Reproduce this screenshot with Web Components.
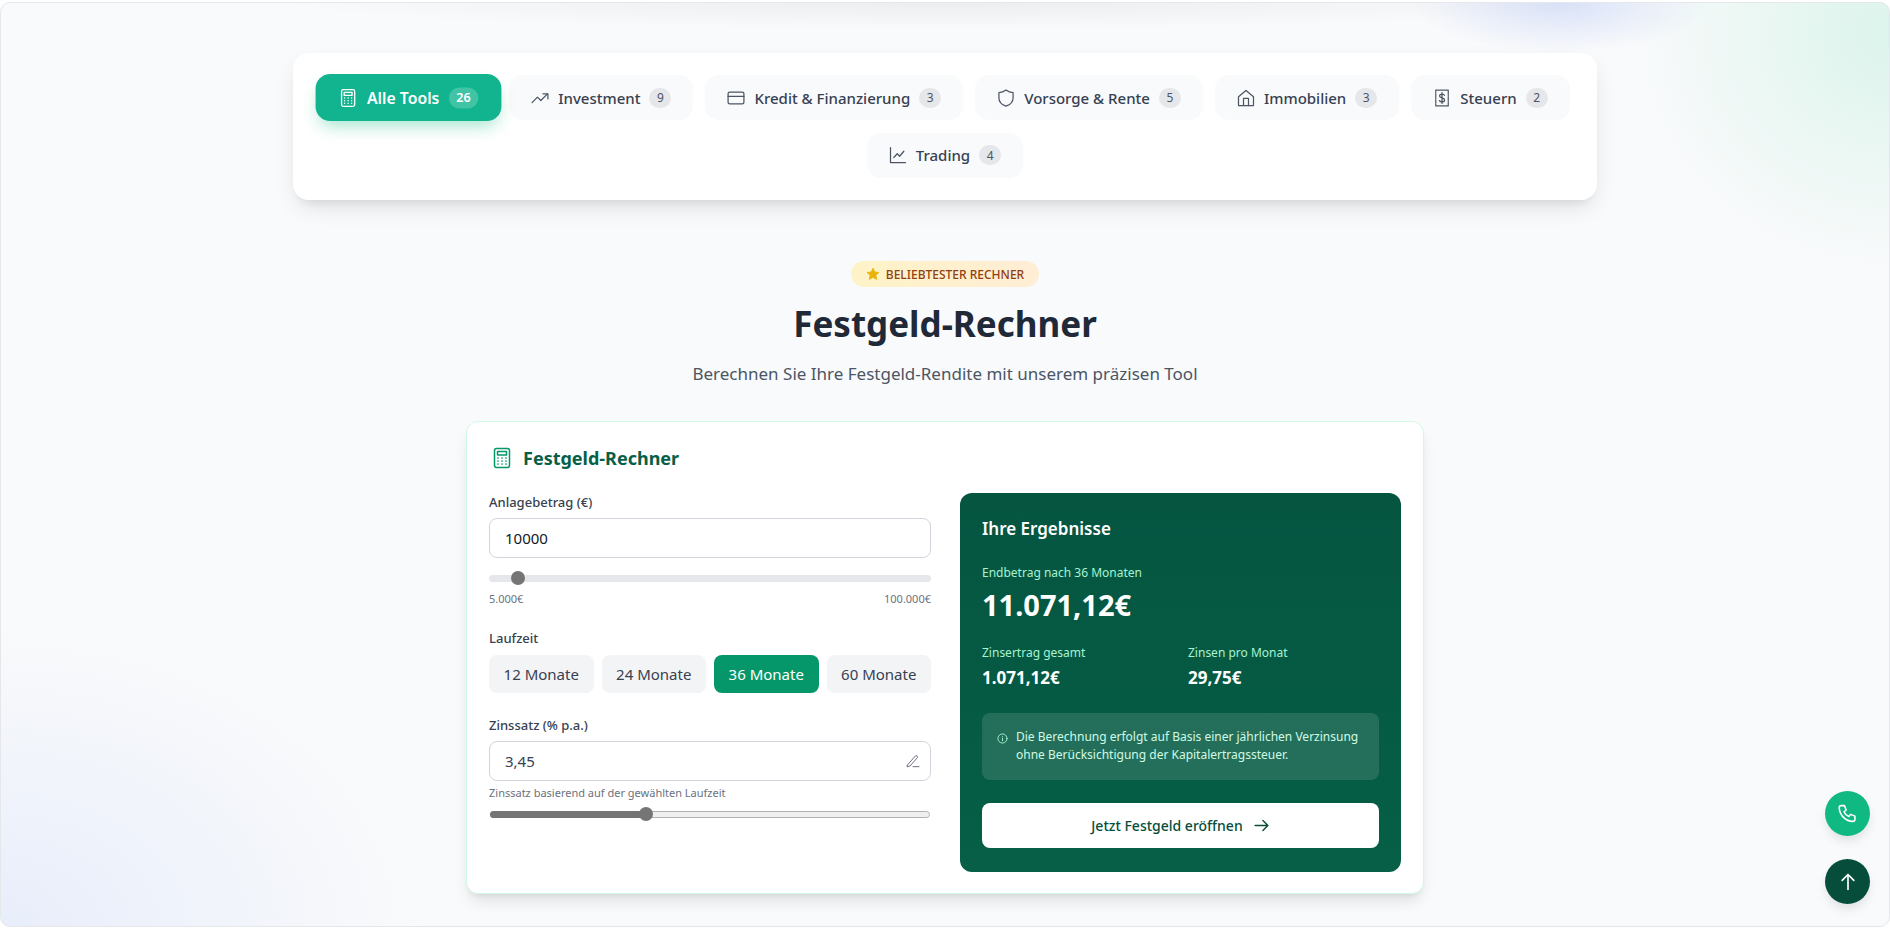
<!DOCTYPE html>
<html lang="de">
<head>
<meta charset="utf-8">
<title>Festgeld-Rechner</title>
<style>
html, body { margin: 0; height: 100%; }
body { font-family: "Noto Sans", "Open Sans", sans-serif; overflow: hidden; background: #fff; }
</style>
</head>
<body>
<page-frame>
  <tool-nav>
    <tool-tab active icon="calc" count="26">Alle Tools</tool-tab>
    <tool-tab icon="trend" count="9">Investment</tool-tab>
    <tool-tab icon="card" count="3">Kredit &amp; Finanzierung</tool-tab>
    <tool-tab icon="shield" count="5">Vorsorge &amp; Rente</tool-tab>
    <tool-tab icon="house" count="3">Immobilien</tool-tab>
    <tool-tab icon="tax" count="2">Steuern</tool-tab>
    <tool-tab icon="chart" count="4">Trading</tool-tab>
  </tool-nav>
  <section-head>
    <span slot="badge">BELIEBTESTER RECHNER</span>
    <span slot="title">Festgeld-Rechner</span>
    <span slot="sub">Berechnen Sie Ihre Festgeld-Rendite mit unserem präzisen Tool</span>
  </section-head>
  <calc-card>
    <span slot="title">Festgeld-Rechner</span>
    <calc-form slot="left"></calc-form>
    <result-panel slot="right"></result-panel>
  </calc-card>
  <float-buttons></float-buttons>
</page-frame>

<script>
const ICONS = {
  calc: '<rect x="4.5" y="2.5" width="15" height="19" rx="2"/><rect x="7.5" y="5.5" width="9" height="3.5"/><path d="M8 12h.01M12 12h.01M16 12h.01M8 15h.01M12 15h.01M16 15h.01M8 18h.01M12 18h.01M16 18h.01" stroke-width="1.7"/>',
  trend: '<path d="M2.5 17.5l6.5-6.5 4 4 8-8"/><path d="M15.5 7h6v6"/>',
  card: '<rect x="2.5" y="5" width="19" height="14" rx="2"/><path d="M2.5 10h19"/>',
  shield: '<path d="M12 2.5c2.6 2 5.3 3 8.5 3v6.5c0 4.8-3.4 8-8.5 9.700-5.100-1.700-8.500-4.900-8.500-9.700V5.500c3.200 0 5.900-1 8.500-3z"/>',
  house: '<path d="M3 10.500L12 3l9 7.500V21H3z"/><path d="M9 21v-8.500h6V21"/>',
  tax: '<path d="M4.500 2.500h15v19h-15z" stroke-dasharray="1.600 .9"/><path d="M15 8.700c-.6-1-1.600-1.500-3-1.500-1.700 0-2.900.9-2.900 2.300 0 3.200 6 1.700 6 4.900 0 1.400-1.300 2.300-3.100 2.300-1.400 0-2.500-.6-3.100-1.600M12 5.500v13"/>',
  chart: '<path d="M3 3v18h18"/><path d="M7 15l4-4.500 3 3 5-6"/>'
};

function icon(name, size) {
  return `<svg width="${size}" height="${size}" viewBox="0 0 24 24" fill="none" stroke="currentColor" stroke-width="1.5" stroke-linecap="round" stroke-linejoin="round">${ICONS[name]}</svg>`;
}

class PageFrame extends HTMLElement {
  constructor() {
    super();
    this.attachShadow({ mode: 'open' });
    this.shadowRoot.innerHTML = `
    <style>
    :host {
      display: block;
      box-sizing: border-box;
      height: 925px;
      margin-top: 2px;
      padding-top: 50px;
      border: 1px solid #e5e7eb;
      border-radius: 10px;
      background:
        radial-gradient(ellipse 680px 26px at 946px 0, rgba(0,0,0,.05), transparent),
        radial-gradient(ellipse 150px 50px at 1560px 0, rgba(190,205,245,.55), transparent),
        radial-gradient(ellipse 260px 240px at 1890px 30px, rgba(200,240,225,.6), transparent),
        radial-gradient(ellipse 420px 300px at 0 925px, rgba(215,225,250,.5), transparent),
        #f9fafb;
      overflow: hidden;
    }
    </style>
    <slot></slot>
    `;
  }
}

class ToolNav extends HTMLElement {
  constructor() {
    super();
    this.attachShadow({ mode: 'open' });
    this.shadowRoot.innerHTML = `
    <style>
    :host {
      display: flex;
      flex-wrap: wrap;
      justify-content: center;
      gap: 12px;
      box-sizing: border-box;
      width: 1304px;
      height: 147px;
      margin: 0 auto;
      padding: 22px 24px;
      background: rgba(255,255,255,.95);
      border-radius: 16px;
      box-shadow: 0 10px 25px -5px rgba(0,0,0,.12), 0 8px 10px -6px rgba(0,0,0,.08);
    }
    </style>
    <slot></slot>
    `;
  }
}

class ToolTab extends HTMLElement {
  constructor() {
    super();
    this.attachShadow({ mode: 'open' });
  }
  connectedCallback() {
    const iconName = this.getAttribute('icon');
    const count = this.getAttribute('count');
    this.shadowRoot.innerHTML = `
    <style>
    :host {
      display: inline-flex;
      align-items: center;
      gap: 8px;
      box-sizing: border-box;
      height: 45px;
      padding: 0 22px 0 21px;
      border-radius: 14px;
      background: #f9fafb;
      color: #374151;
      font-size: 15px;
      font-weight: 500;
      white-space: nowrap;
    }
    :host([active]) {
      background: linear-gradient(135deg, #10b981, #14b8a6 90%);
      background: #12b48f;
      color: #fff;
      font-weight: 600;
      transform: scale(1.05);
      box-shadow: 0 8px 16px -4px rgba(16,185,129,.4);
    }
    svg { flex: none; color: #4b5563; }
    :host([active]) svg { color: #fff; }
    .count {
      display: flex;
      align-items: center;
      justify-content: center;
      min-width: 22px;
      height: 20px;
      padding: 0 2px;
      box-sizing: border-box;
      margin-left: 1px;
      border-radius: 10px;
      background: #e5e7eb;
      color: #4b5563;
      font-size: 12px;
      font-weight: 400;
    }
    :host([active]) .count { background: rgba(255,255,255,.2); color: #fff; font-weight: 600; min-width: 28px; }
    </style>
    ${icon(iconName, 20)}
    <span><slot></slot></span>
    <span class="count">${count}</span>
    `;
  }
}

class SectionHead extends HTMLElement {
  constructor() {
    super();
    this.attachShadow({ mode: 'open' });
    this.shadowRoot.innerHTML = `
    <style>
    :host { display: flex; flex-direction: column; align-items: center; margin-top: 61px; }
    .badge {
      display: flex;
      align-items: center;
      gap: 6px;
      height: 26px;
      padding: 0 15px;
      border-radius: 13px;
      background: linear-gradient(90deg, #fef3c7, #ffedd5);
      color: #92400e;
      font-size: 12px;
      font-weight: 500;
    }
    .title { margin: 13px 0 0; font-size: 35px; line-height: 48px; font-weight: 700; color: #1f2937; }
    .sub { margin: 13px 0 0; font-size: 17px; line-height: 26px; color: #4b5563; }
    </style>
    <div class="badge">
      <svg width="14" height="14" viewBox="0 0 24 24"><path d="M12 2l3 6.600 7.200.8-5.400 4.800 1.500 7.100L12 17.700 5.700 21.300l1.500-7.100L1.800 9.400 9 8.600z" fill="#eab308" stroke="#eab308" stroke-width="1.500" stroke-linejoin="round"/></svg>
      <slot name="badge"></slot>
    </div>
    <h1 class="title"><slot name="title"></slot></h1>
    <p class="sub"><slot name="sub"></slot></p>
    `;
  }
}

class CalcCard extends HTMLElement {
  constructor() {
    super();
    this.attachShadow({ mode: 'open' });
    this.shadowRoot.innerHTML = `
    <style>
    :host {
      display: block;
      box-sizing: border-box;
      width: 958px;
      height: 473px;
      margin: 34px auto 0;
      padding: 21px 22px 21px;
      background: #fff;
      border: 1px solid #d1fae5;
      border-radius: 12px;
      box-shadow: 0 10px 15px -3px rgba(0,0,0,.1), 0 4px 6px -4px rgba(0,0,0,.1);
    }
    .head { display: flex; align-items: center; gap: 9px; height: 30px; color: #065f46; }
    .head svg { color: #059669; margin-left: 1px; }
    h2 { margin: 0; font-size: 18px; font-weight: 700; color: #065f46; }
    .cols { display: grid; grid-template-columns: 442px 441px; gap: 29px; margin-top: 20px; }
    </style>
    <div class="head">
      ${icon('calc', 24)}
      <h2><slot name="title"></slot></h2>
    </div>
    <div class="cols">
      <slot name="left"></slot>
      <slot name="right"></slot>
    </div>
    `;
  }
}

class RangeBar extends HTMLElement {
  constructor() {
    super();
    this.attachShadow({ mode: 'open' });
  }
  connectedCallback() {
    const pos = this.getAttribute('pos');
    this.shadowRoot.innerHTML = `
    <style>
    :host { display: block; position: relative; height: 14px; }
    .track {
      position: absolute; left: 0; right: 0; top: 4px; height: 7px;
      box-sizing: border-box;
      border-radius: 4px;
      background: #e5e7eb;
    }
    :host([native]) .track { background: #efefef; border: 1px solid #b2b2b2; left: 1px; right: 1px; }
    .fill { display: none; position: absolute; left: 1px; top: 4px; height: 7px; width: ${pos}px; background: #757575; border-radius: 4px 0 0 4px; }
    :host([native]) .fill { display: block; }
    .thumb {
      position: absolute; left: ${pos}px; top: 0; margin-left: -7px;
      width: 14px; height: 14px; border-radius: 50%; background: #757575;
    }
    </style>
    <div class="track"></div>
    <div class="fill"></div>
    <div class="thumb"></div>
    `;
  }
}

class ValueField extends HTMLElement {
  constructor() {
    super();
    this.attachShadow({ mode: 'open' });
    this.shadowRoot.innerHTML = `
    <style>
    :host {
      display: flex;
      align-items: center;
      justify-content: space-between;
      box-sizing: border-box;
      height: 40px;
      padding: 0 9px 0 15px;
      background: #fff;
      border: 1px solid #d1d5db;
      border-radius: 8px;
      font-size: 15px;
      color: #111827;
    }
    :host([muted]) { color: #374151; }
    ::slotted(svg) { color: #6b7280; }
    </style>
    <slot></slot>
    <slot name="end"></slot>
    `;
  }
}

class TermPicker extends HTMLElement {
  constructor() {
    super();
    this.attachShadow({ mode: 'open' });
    this.shadowRoot.innerHTML = `
    <style>
    :host { display: grid; grid-template-columns: repeat(4, 1fr); gap: 8px; }
    div {
      display: flex;
      align-items: center;
      justify-content: center;
      height: 38px;
      border-radius: 8px;
      background: #f3f4f6;
      color: #374151;
      font-size: 15px;
    }
    .on { background: #059669; color: #fff; }
    </style>
    <div>12 Monate</div>
    <div>24 Monate</div>
    <div class="on">36 Monate</div>
    <div>60 Monate</div>
    `;
  }
}

class CalcForm extends HTMLElement {
  constructor() {
    super();
    this.attachShadow({ mode: 'open' });
    this.shadowRoot.innerHTML = `
    <style>
    :host { display: block; }
    label { display: block; height: 18px; line-height: 18px; font-size: 13px; font-weight: 500; color: #374151; }
    value-field { margin-top: 7px; }
    .ends { display: flex; justify-content: space-between; margin-top: 7px; font-size: 11px; line-height: 14px; color: #6b7280; }
    .hint { margin-top: 5px; font-size: 11px; line-height: 14px; color: #6b7280; }
    </style>
    <label>Anlagebetrag (€)</label>
    <value-field>10000</value-field>
    <range-bar pos="29" style="margin-top:13px"></range-bar>
    <div class="ends"><span>5.000€</span><span>100.000€</span></div>
    <label style="margin-top:23px">Laufzeit</label>
    <term-picker style="margin-top:8px"></term-picker>
    <label style="margin-top:23px">Zinssatz (% p.a.)</label>
    <value-field muted>3,45
      <svg slot="end" width="16" height="16" viewBox="0 0 24 24" fill="none" stroke="currentColor" stroke-width="1.500" stroke-linecap="round" stroke-linejoin="round"><path d="M4 17.500L15.500 4.500a2 2 0 0 1 3 2.600L7.500 19.500 3.500 20.500zM12 20.500h9"/></svg>
    </value-field>
    <div class="hint">Zinssatz basierend auf der gewählten Laufzeit</div>
    <range-bar native pos="157" style="margin-top:7px"></range-bar>
    `;
  }
}

class ResultPanel extends HTMLElement {
  constructor() {
    super();
    this.attachShadow({ mode: 'open' });
    this.shadowRoot.innerHTML = `
    <style>
    :host {
      display: block;
      box-sizing: border-box;
      height: 379px;
      padding: 24px 22px 0;
      border-radius: 12px;
      background: linear-gradient(180deg, #055541, #065f46);
      color: #fff;
    }
    h3 { margin: 0; font-size: 17px; line-height: 24px; font-weight: 600; }
    .small { font-size: 12px; line-height: 18px; color: #a7f3d0; }
    .big { margin-top: 3px; font-size: 29px; line-height: 40px; font-weight: 700; }
    .two { display: grid; grid-template-columns: 206px 1fr; margin-top: 19px; }
    .val { margin-top: 4px; font-size: 17px; line-height: 24px; font-weight: 700; }
    .info {
      display: flex;
      gap: 8px;
      box-sizing: border-box;
      height: 67px;
      margin-top: 23px;
      padding: 15px 15px 0;
      border-radius: 8px;
      background: rgba(255,255,255,.12);
      color: #d1fae5;
      font-size: 12px;
      line-height: 18px;
    }
    .info svg { flex: none; margin-top: 5px; color: #a7f3d0; }
    .cta {
      display: flex;
      align-items: center;
      justify-content: center;
      gap: 10px;
      height: 45px;
      margin-top: 23px;
      border-radius: 8px;
      background: #fff;
      color: #064e3b;
      font-size: 14px;
      font-weight: 500;
    }
    </style>
    <h3>Ihre Ergebnisse</h3>
    <div class="small" style="margin-top:23px">Endbetrag nach 36 Monaten</div>
    <div class="big">11.071,12€</div>
    <div class="two">
      <div><div class="small">Zinsertrag gesamt</div><div class="val">1.071,12€</div></div>
      <div><div class="small">Zinsen pro Monat</div><div class="val">29,75€</div></div>
    </div>
    <div class="info">
      <svg width="11" height="11" viewBox="0 0 24 24" fill="none" stroke="currentColor" stroke-width="2" stroke-linecap="round"><circle cx="12" cy="12" r="10"/><path d="M12 11v6M12 7.500h.01"/></svg>
      <span>Die Berechnung erfolgt auf Basis einer jährlichen Verzinsung ohne Berücksichtigung der Kapitalertragssteuer.</span>
    </div>
    <div class="cta">Jetzt Festgeld eröffnen
      <svg width="17" height="17" viewBox="0 0 24 24" fill="none" stroke="currentColor" stroke-width="2" stroke-linecap="round" stroke-linejoin="round"><path d="M3 12h18M14 5l7 7-7 7"/></svg>
    </div>
    `;
  }
}

class FloatButtons extends HTMLElement {
  constructor() {
    super();
    this.attachShadow({ mode: 'open' });
    this.shadowRoot.innerHTML = `
    <style>
    :host { position: fixed; right: 20px; bottom: 24px; display: flex; flex-direction: column; gap: 23px; }
    div {
      display: flex; align-items: center; justify-content: center;
      width: 45px; height: 45px; border-radius: 50%; color: #fff;
      box-shadow: 0 6px 12px -2px rgba(0,0,0,.12);
    }
    .phone { background: #10b981; }
    .up { background: #064e3b; }
    </style>
    <div class="phone"><svg width="21" height="21" viewBox="0 0 24 24" fill="none" stroke="currentColor" stroke-width="1.800" stroke-linecap="round" stroke-linejoin="round"><path d="M5 3h3.500l2 5-2.500 2c1 2.500 3 4.500 5.500 5.500l2-2.500 5 2V18.500c0 1.400-1.100 2.500-2.500 2.500C10 21 3 14 2.500 5.500 2.500 4.100 3.600 3 5 3z"/></svg></div>
    <div class="up"><svg width="20" height="20" viewBox="0 0 24 24" fill="none" stroke="currentColor" stroke-width="2" stroke-linecap="round" stroke-linejoin="round"><path d="M12 21V3M5 10l7-7 7 7"/></svg></div>
    `;
  }
}

customElements.define('page-frame', PageFrame);
customElements.define('tool-nav', ToolNav);
customElements.define('tool-tab', ToolTab);
customElements.define('section-head', SectionHead);
customElements.define('calc-card', CalcCard);
customElements.define('range-bar', RangeBar);
customElements.define('value-field', ValueField);
customElements.define('term-picker', TermPicker);
customElements.define('calc-form', CalcForm);
customElements.define('result-panel', ResultPanel);
customElements.define('float-buttons', FloatButtons);
</script>
</body>
</html>
